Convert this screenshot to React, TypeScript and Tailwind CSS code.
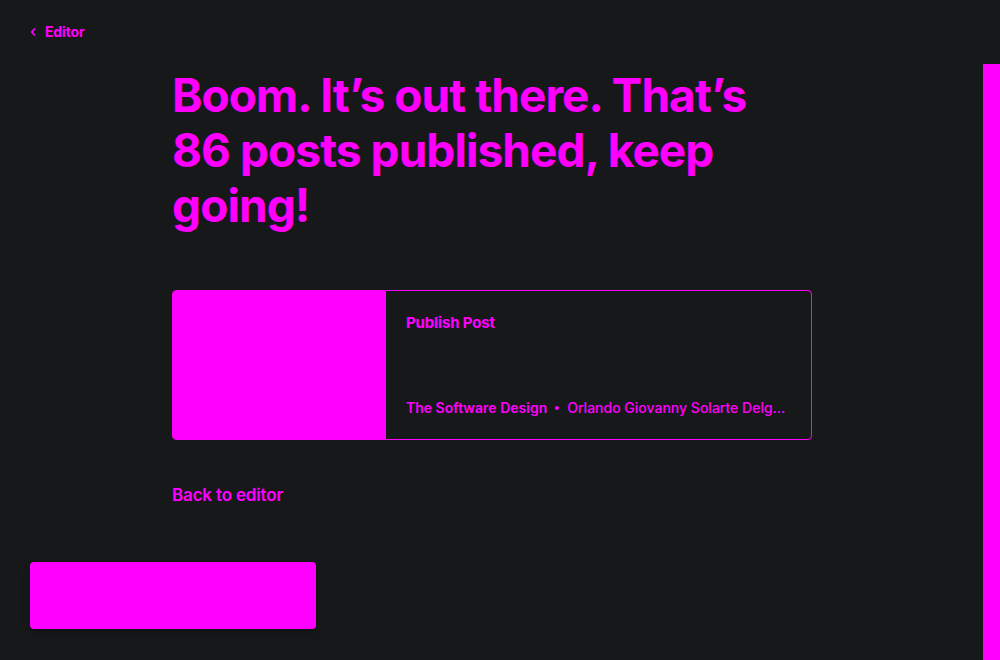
export default function App() {
  return (
    <div className="flex h-[660px] w-full overflow-hidden bg-[#17181a] font-['Inter',sans-serif] text-[#ff00ff]">
      <div className="flex flex-1 flex-col px-[30px] pt-[22px]">
        <a className="flex items-center gap-[8px] text-[14px] font-bold leading-[20px] tracking-[-0.01em]">
          <svg width="7" height="10" viewBox="0 0 7 10" fill="none" stroke="currentColor" strokeWidth="1.8">
            <path d="M5 1.5 L1.8 5 L5 8.5" />
          </svg>
          Editor
        </a>
        <div className="ml-[142px] mt-[26px] w-[640px]">
          <h1 className="w-[590px] text-[46px] font-bold leading-[55px] tracking-[-0.02em]">
            Boom. It’s out there. That’s 86 posts published, keep going!
          </h1>
          <div className="mt-[57px] flex h-[150px] overflow-hidden rounded-[4px] border border-[#ff00ff]">
            <div className="w-[213px] shrink-0 bg-[#ff00ff]" />
            <div className="flex min-w-0 flex-1 flex-col justify-between px-[20px] pt-[23px] pb-[22px]">
              <div className="text-[15px] font-bold leading-[18px] tracking-[-0.01em]">Publish Post</div>
              <div className="flex items-center gap-[8px] text-[14px] font-semibold leading-[18px]">
                <span className="shrink-0">The Software Design</span>
                <span className="h-[4px] w-[4px] shrink-0 rounded-full bg-[#ff00ff]" />
                <span className="w-[224px] truncate font-medium">Orlando Giovanny Solarte Delgado</span>
              </div>
            </div>
          </div>
          <a className="mt-[45px] block text-[17px] font-semibold leading-[20px] tracking-[-0.01em]">Back to editor</a>
        </div>
        <div className="mt-[57px] h-[67px] w-[286px] rounded-[4px] bg-[#ff00ff] shadow-[0_4px_10px_rgba(0,0,0,0.25)]" />
      </div>
      <div className="mt-[64px] w-[17px] shrink-0 bg-[#ff00ff]" />
    </div>
  );
}
